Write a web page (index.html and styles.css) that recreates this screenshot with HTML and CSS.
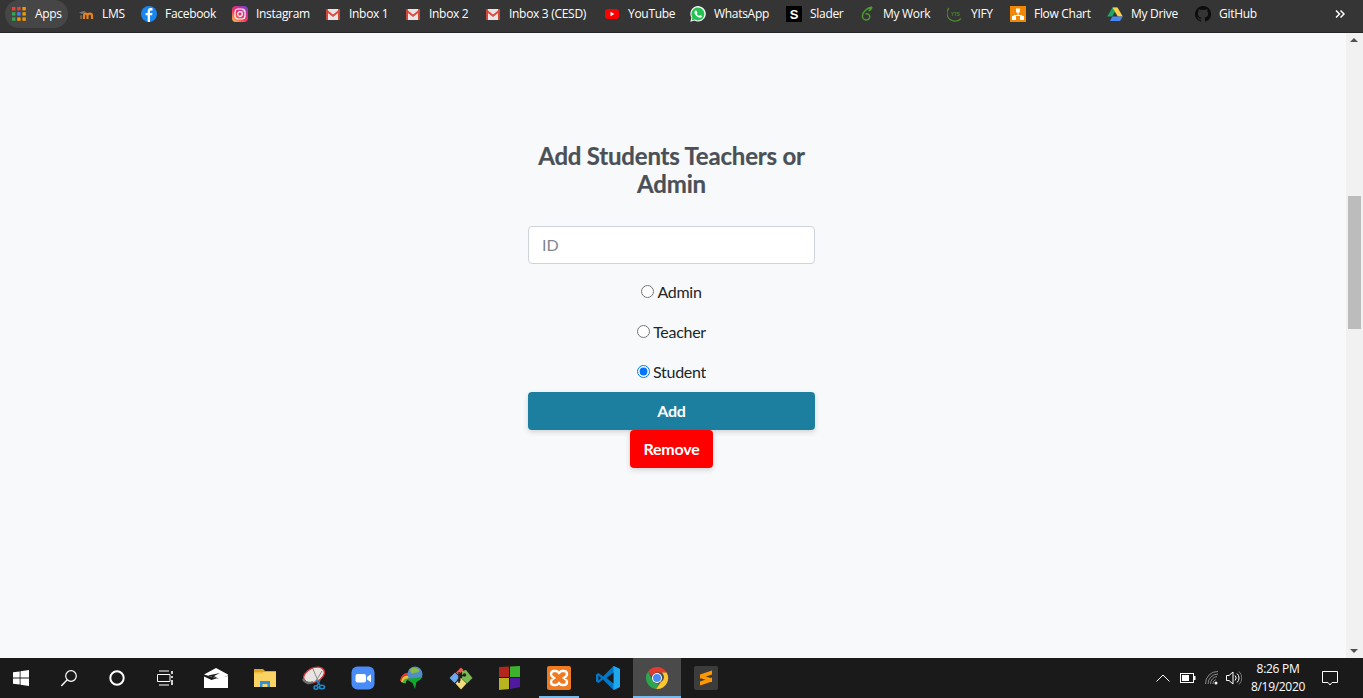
FILE: index.html
```html
<!DOCTYPE html>
<html lang="en">
<head>
<meta charset="utf-8">
<title>Add Students Teachers or Admin</title>
<link rel="stylesheet" href="styles.css">
</head>
<body>
<div class="screen">
  <nav class="bookmarks">
    <a class="bm bm-apps"><svg class="ico" viewBox="0 0 16 16"><g><rect x="1" y="1" width="3.4" height="3.4" fill="#ea4335"/><rect x="6.2" y="1" width="3.4" height="3.4" fill="#ea4335"/><rect x="11.4" y="1" width="3.4" height="3.4" fill="#f29900"/><rect x="1" y="6.2" width="3.4" height="3.4" fill="#34a853"/><rect x="6.2" y="6.2" width="3.4" height="3.4" fill="#4285f4"/><rect x="11.4" y="6.2" width="3.4" height="3.4" fill="#f29900"/><rect x="1" y="11.4" width="3.4" height="3.4" fill="#34a853"/><rect x="6.2" y="11.4" width="3.4" height="3.4" fill="#f29900"/><rect x="11.4" y="11.4" width="3.4" height="3.4" fill="#f29900"/></g></svg><span>Apps</span></a>
    <a class="bm"><svg class="ico" viewBox="0 0 16 16"><path d="M1 6.500L6 5l2 1-4 2z" fill="#777"/><path d="M3 13V9.300" stroke="#8a6a4a" stroke-width="1.600"/><path d="M6 13V9.500c0-2.600 3.500-2.600 3.500 0V13M9.500 9.500c0-2.600 4.500-2.600 4.500 0V13" fill="none" stroke="#e8811c" stroke-width="2.200"/></svg><span>LMS</span></a>
    <a class="bm"><svg class="ico" viewBox="0 0 16 16"><circle cx="8" cy="8" r="8" fill="#1a86f0"/><path d="M9 16V9.300h2.100l.4-2.400H9V5.600c0-.8.300-1.200 1.200-1.200h1.300V2.300c-.5-.1-1.200-.2-1.900-.2C8 2.100 6.700 3.300 6.700 5.300v1.600H4.600v2.400h2.100V16z" fill="#fff"/></svg><span>Facebook</span></a>
    <a class="bm"><svg class="ico" viewBox="0 0 16 16"><defs><linearGradient id="ig" x1="0.100" y1="1" x2="0.900" y2="0"><stop offset="0" stop-color="#fdc04d"/><stop offset=".4" stop-color="#ee3a5c"/><stop offset=".75" stop-color="#c42d9f"/><stop offset="1" stop-color="#5d4fd0"/></linearGradient></defs><rect width="16" height="16" rx="4" fill="url(#ig)"/><rect x="3" y="3" width="10" height="10" rx="3" fill="none" stroke="#fff" stroke-width="1.200"/><circle cx="8" cy="8" r="2.300" fill="none" stroke="#fff" stroke-width="1.200"/><circle cx="11.100" cy="4.900" r=".7" fill="#fff"/></svg><span>Instagram</span></a>
    <a class="bm"><svg class="ico" viewBox="0 0 16 16"><use href="#gm"/></svg><span>Inbox 1</span></a>
    <a class="bm"><svg class="ico" viewBox="0 0 16 16"><use href="#gm"/></svg><span>Inbox 2</span></a>
    <a class="bm"><svg class="ico" viewBox="0 0 16 16"><use href="#gm"/></svg><span>Inbox 3 (CESD)</span></a>
    <a class="bm"><svg class="ico" viewBox="0 0 16 16"><rect x="1" y="3" width="14" height="10" rx="3" fill="#f00"/><path d="M6.500 5.800v4.400L10.300 8z" fill="#fff"/></svg><span>YouTube</span></a>
    <a class="bm"><svg class="ico" viewBox="0 0 16 16"><path d="M.3 15.700l1.100-4A7.700 7.700 0 1 1 4.400 14.600z" fill="#fff"/><path d="M1.600 14.400l.8-2.900A6.500 6.500 0 1 1 4.600 13.600z" fill="#25c253"/><path d="M5.800 4.500c-.5 0-1.300.6-1.300 1.800 0 2.400 3 5.400 5.600 5.400 1.200 0 1.800-.9 1.800-1.500 0-.3-1.600-1.100-1.900-1.100-.3 0-.6.8-.9.8-.6 0-2.300-1.500-2.300-2.100 0-.3.600-.6.600-1 0-.3-.6-2.300-1.600-2.300z" fill="#fff"/></svg><span>WhatsApp</span></a>
    <a class="bm"><svg class="ico" viewBox="0 0 16 16"><rect width="16" height="16" fill="#000"/><text x="8" y="12.500" class="slader-s">S</text></svg><span>Slader</span></a>
    <a class="bm"><svg class="ico" viewBox="0 0 16 16"><path d="M13 1C8 2 3 6 3.500 11c.3 3 4.500 4 6.500 1.800 2-2.300 0-5.800-3.500-4.800M13 1c-.6 2-1.500 3.500-3.500 3.800" fill="none" stroke="#4aa02c" stroke-width="1.400"/></svg><span>My Work</span></a>
    <a class="bm"><svg class="ico" viewBox="0 0 16 16"><path d="M2 2A7.500 7.500 0 0 0 14 12.500" fill="none" stroke="#4c8a2a" stroke-width="1.200"/><text x="8.500" y="9.500" class="yts">YTS</text></svg><span>YIFY</span></a>
    <a class="bm"><svg class="ico" viewBox="0 0 16 16"><rect width="16" height="16" fill="#f08705"/><path d="M8 6v3M4 12V9.500h8V12" fill="none" stroke="#fff" stroke-width="1"/><rect x="6" y="2.500" width="4" height="4" fill="#fff"/><rect x="2" y="10" width="4" height="4" fill="#fff"/><rect x="10" y="10" width="4" height="4" fill="#fff"/></svg><span>Flow Chart</span></a>
    <a class="bm"><svg class="ico" viewBox="0 0 16 16"><path d="M5.500 1.500h5L5.200 10.500H.2z" fill="#1fa463"/><path d="M10.500 1.500l5.300 9h-5L5.500 1.500z" fill="#ffd04b"/><path d="M3 15l2.400-4.500h10.400L13 15z" fill="#4688f4"/></svg><span>My Drive</span></a>
    <a class="bm"><svg class="ico" viewBox="0 0 16 16"><path d="M8 0a8 8 0 0 0-2.500 15.600c.4.100.5-.2.500-.4v-1.400c-2.200.5-2.700-1-2.700-1-.4-.9-.9-1.200-.9-1.200-.7-.5.100-.5.100-.5.800.1 1.200.8 1.200.8.700 1.200 1.900.9 2.300.7.100-.5.300-.9.500-1.100-1.800-.2-3.600-.9-3.600-4 0-.9.300-1.600.8-2.100-.1-.2-.4-1 .1-2.100 0 0 .7-.2 2.200.8a7.600 7.600 0 0 1 4 0c1.500-1 2.200-.8 2.200-.8.400 1.100.2 1.900.1 2.100.5.600.8 1.300.8 2.100 0 3.100-1.900 3.800-3.700 4 .3.300.6.800.6 1.500v2.200c0 .2.100.5.600.4A8 8 0 0 0 8 0z" fill="#0d0d0d"/></svg><span>GitHub</span></a>
    <a class="bm-more"><svg width="10" height="10" viewBox="0 0 10 10"><path d="M1 1.500L4.500 5 1 8.500M5.500 1.500L9 5 5.500 8.500" fill="none" stroke="#fff" stroke-width="1.500"/></svg></a>
  </nav>

  <svg class="defs" width="0" height="0"><defs><g id="gm"><rect x="1" y="3" width="14" height="11" fill="#e6e6e6"/><path d="M1 3l7 5.500L15 3v2.500L8 11 1 5.500z" fill="#dc4b3e"/><rect x="1" y="3" width="2" height="11" fill="#d44638"/><rect x="13" y="3" width="2" height="11" fill="#d44638"/></g></defs></svg>

  <div class="viewport">
    <main class="page">
      <form class="panel">
        <h1 class="title">Add Students Teachers or Admin</h1>
        <input class="field" type="text" placeholder="ID">
        <label class="choice"><input type="radio" name="role"><span>Admin</span></label>
        <label class="choice"><input type="radio" name="role"><span>Teacher</span></label>
        <label class="choice"><input type="radio" name="role" checked><span>Student</span></label>
        <button class="btn btn-add" type="button">Add</button>
        <button class="btn btn-remove" type="button">Remove</button>
      </form>
    </main>
    <div class="scrollbar">
      <span class="arrow arrow-up"></span>
      <span class="thumb"></span>
      <span class="arrow arrow-down"></span>
    </div>
  </div>

  <footer class="taskbar">
    <span class="tb tb-start"><svg width="16" height="16" viewBox="0 0 16 16"><path d="M0 2.300l6.700-.9v6.200H0zM7.500 1.300L16 0v7.600H7.500zM0 8.400h6.700v6.200L0 13.700zM7.500 8.400H16V16l-8.500-1.200z" fill="#fff"/></svg></span>
    <span class="tb"><svg width="18" height="18" viewBox="0 0 18 18"><circle cx="11" cy="7" r="5.300" fill="none" stroke="#fff" stroke-width="1.200"/><path d="M7.200 10.800L1.300 17" stroke="#fff" stroke-width="1.400"/></svg></span>
    <span class="tb"><svg width="16" height="16" viewBox="0 0 16 16"><circle cx="8" cy="8" r="6.700" fill="none" stroke="#fff" stroke-width="2"/></svg></span>
    <span class="tb"><svg width="16" height="16" viewBox="0 0 16 16"><path d="M2 1h10M2 15h10M.5 4.500h12.500v7H.500z" fill="none" stroke="#fff" stroke-width="1"/><path d="M15 1v3M15 6v2M15 10v5" stroke="#fff" stroke-width="1.600"/></svg></span>
    <div class="pinned">
      <span class="tb"><svg width="24" height="20" viewBox="0 0 24 20"><path d="M0 6.500L12 0l12 6.500v1L15 11z" fill="#fff"/><path d="M0 8.500l7.500 3.500L15 9.500 24 8v12H0z" fill="#fff"/><path d="M4 7.500L16 5l-6 3 5 3z" fill="#1a1a1a"/></svg></span>
      <span class="tb"><svg width="24" height="20" viewBox="0 0 24 20"><path d="M1 1h9l2 2h11v3H1z" fill="#e0a526"/><path d="M1 4h22v15H1z" fill="#f9d465"/><path d="M7 19v-6h10v6h-2.500v-3h-5v3z" fill="#2f8fd8"/><path d="M1 4h9v1.500H1z" fill="#f2bd3a"/></svg></span>
      <span class="tb"><svg width="24" height="24" viewBox="0 0 24 24"><ellipse cx="12" cy="9" rx="11" ry="7" transform="rotate(-25 12 9)" fill="#e8e4e0" stroke="#d8333c" stroke-width="1.300"/><path d="M1 13c2 4 6 5 10 3" fill="none" stroke="#6f6f6f" stroke-width="2.400"/><path d="M11 3l5 12M20 5l-6 10" stroke="#8a8a8a" stroke-width="1"/><path d="M14 14l4 5M18 14l-3 6" stroke="#1f88c8" stroke-width="1.400"/><ellipse cx="20" cy="21" rx="2.500" ry="1.800" fill="none" stroke="#1f88c8" stroke-width="1.600"/><ellipse cx="14" cy="21.500" rx="2" ry="1.700" fill="none" stroke="#1f88c8" stroke-width="1.600"/></svg></span>
      <span class="tb"><svg width="24" height="24" viewBox="0 0 24 24"><rect x=".5" y=".5" width="23" height="23" rx="6" fill="#4a8cf7"/><rect x="4.500" y="8" width="10.500" height="8.500" rx="2" fill="#fff"/><path d="M16 11l4-2.800v8L16 13.500z" fill="#fff"/></svg></span>
      <span class="tb"><svg width="24" height="24" viewBox="0 0 24 24"><path d="M0 15C1 9 5 6 9 7l3 4c-4-1-6 1-6.500 5.500z" fill="#e23a2f"/><path d="M1 16c1-5 4-7 7-6l2 2.500c-3-.5-4.500 1-5 4.500z" fill="#f4c430"/><path d="M2.500 17C3 13.500 5 12 7.500 12.500L9 14c-2-.5-3 .5-3.300 3.500z" fill="#3fb04a"/><circle cx="15" cy="8" r="7.500" fill="#4f8ec9"/><path d="M9.500 3.500c3-2.500 8-2.500 10 1-2 3.500-5 1-7.500 3.500z" fill="#8cb84a"/><path d="M6 13l17-2-6.500 5-1.500 7-2.500-6z" fill="#11a82e"/></svg></span>
      <span class="tb"><svg width="24" height="24" viewBox="0 0 24 24"><path d="M7 6.500l5-5 2.500 2.500-5 5z" fill="#f05c54"/><path d="M.5 12L6 6.500 11 11.500 5.500 17z" fill="#6ea8f0"/><path d="M13 5l4-1 6.500 8-5.500 5.500-5-5z" fill="#76b852"/><path d="M6.500 17.500L12 12l5.500 5.500-5.500 6z" fill="#f4dc7a"/><path d="M10 6v11M10 11l5-2" stroke="#222" stroke-width="1.400" fill="none"/><circle cx="15.500" cy="9" r="1.700" fill="#222"/><circle cx="10" cy="14" r="1.700" fill="#222"/></svg></span>
      <span class="tb"><svg width="22" height="24" viewBox="0 0 22 24"><path d="M0 1l10-.5V11H0z" fill="#b3261c"/><path d="M11 .5L21 0v11H11z" fill="#3db22c"/><path d="M0 12h10v11L0 24z" fill="#b9b31f"/><path d="M11 12h10v9l-10 2z" fill="#4f1aa0"/></svg></span>
      <span class="tb tb-open"><svg width="24" height="24" viewBox="0 0 24 24"><rect width="24" height="24" rx="2" fill="#ee7a22"/><path d="M7 5h2c1.500 0 2 1 3 2 1-1 1.500-2 3-2h2c2.500 0 3 2 3 3.500s-1.500 2.500-3 3.500c1.500 1 3 2 3 3.500s-.5 3.500-3 3.500h-2c-1.500 0-2-1-3-2-1 1-1.500 2-3 2H7c-2.500 0-3-2-3-3.500S5.500 13 7 12c-1.500-1-3-2-3-3.500S4.500 5 7 5z" fill="none" stroke="#fff" stroke-width="2.400"/></svg></span>
      <span class="tb"><svg width="24" height="24" viewBox="0 0 24 24"><path d="M17.500 0L24 3v18l-6.500 3L7 13.500l-4.500 3.500L0 15.500v-7L2.500 7 7 10.500z" fill="#0078c8"/><path d="M17.500 0L24 3v18l-6.500 3z" fill="#1fa8ee"/><path d="M17.500 6.500L10.500 12l7 5.500z" fill="#1a1a1a"/><path d="M2.500 9.500v5L5 12z" fill="#1a1a1a"/></svg></span>
      <span class="tb tb-active"><svg width="24" height="24" viewBox="0 0 24 24"><path d="M12 1a11 11 0 0 1 9.600 5.500H12a5.500 5.500 0 0 0-5.200 3.800L3.100 5.600A11 11 0 0 1 12 1z" fill="#e33b2e"/><path d="M21.600 6.500A11 11 0 0 1 11 23l4.800-7a5.500 5.500 0 0 0 .7-9.500z" fill="#fbc62e"/><path d="M3.100 5.600L7.500 14a5.500 5.500 0 0 0 6.500 3.200L11 23A11 11 0 0 1 3.100 5.600z" fill="#2fa44f"/><circle cx="12" cy="12" r="5" fill="#fff"/><circle cx="12" cy="12" r="4" fill="#4a8af4"/></svg></span>
      <span class="tb"><svg width="24" height="24" viewBox="0 0 24 24"><rect width="24" height="24" rx="2" fill="#3c3c3c"/><path d="M6 8.500L18 4.500v4L6 12.500zM6 8.500l12 4V16L6 12zM6 15.500l12-4v4L6 19.500z" fill="#ff9800"/></svg></span>
    </div>
    <div class="tray">
      <span class="tr tr-caret"><svg width="14" height="8" viewBox="0 0 14 8"><path d="M.5 7.500L7 1l6.500 6.500" fill="none" stroke="#fff" stroke-width="1"/></svg></span>
      <span class="tr tr-batt"><svg width="16" height="10" viewBox="0 0 16 10"><rect x=".5" y=".5" width="13" height="9" fill="none" stroke="#fff"/><rect x="2" y="2" width="7" height="6" fill="#fff"/><rect x="14" y="3" width="1.500" height="4" fill="#fff"/></svg></span>
      <span class="tr tr-wifi"><svg width="14" height="14" viewBox="0 0 14 14"><path d="M.5 13A12 12 0 0 1 13 .5M3 13A10 10 0 0 1 13 3M5.500 13A7.500 7.500 0 0 1 12 5.500M7.800 13a5 5 0 0 1 3-4.500" fill="none" stroke="#8a8a8a" stroke-width="1"/><circle cx="11" cy="12" r="1.500" fill="#fff"/></svg></span>
      <span class="tr tr-vol"><svg width="16" height="14" viewBox="0 0 16 14"><path d="M.5 4.500h2.500L7 1v12L3 9.500H.5z" fill="none" stroke="#fff"/><path d="M9 4.500a3.500 3.500 0 0 1 0 5M11 2.500a6 6 0 0 1 0 9" fill="none" stroke="#fff"/><path d="M13 .5a9 9 0 0 1 0 13" fill="none" stroke="#777"/></svg></span>
      <span class="clock"><span>8:26 PM</span><span>8/19/2020</span></span>
      <span class="tr tr-note"><svg width="16" height="15" viewBox="0 0 16 15"><path d="M.5.500h15v11H10l-2 2.500-2-2.500H.5z" fill="none" stroke="#fff"/></svg></span>
    </div>
  </footer>
</div>
</body>
</html>
```
FILE: styles.css
```css
* { box-sizing: border-box; }
html, body { margin: 0; height: 100%; overflow: hidden; }
body { font-family: "Lato", "Liberation Sans", sans-serif; background: #f8f9fa; }

.screen { display: flex; flex-direction: column; height: 100vh; }

/* Bookmarks bar */
.bookmarks {
  flex: 0 0 33px;
  display: grid;
  grid-template-columns: 67px 63px 91px 93px 80px 80px 119px 86px 96px 73px 88px 63px 97px 88px 1fr 28px;
  align-items: center;
  padding: 0 0 5px 11px;
  background: #353535;
  border-bottom: 1px solid #262626;
  font: 12px/16px "Open Sans", "Noto Sans", sans-serif;
  letter-spacing: -.3px;
  color: #fff;
}
.bm { display: flex; align-items: center; gap: 8px; white-space: nowrap; position: relative; }
.bm-apps::before {
  content: "";
  position: absolute;
  left: -6px; top: -6px;
  width: 63px; height: 28px;
  border-radius: 14px;
  background: #464646;
}
.bm-apps > * { position: relative; }
.bm-more { display: flex; align-items: center; }
.ico { width: 16px; height: 16px; flex: none; }
.slader-s { font: 900 13px "Liberation Sans", sans-serif; fill: #fff; text-anchor: middle; letter-spacing: 0; }
.yts { font: 700 4.500px "Liberation Sans", sans-serif; fill: #4c8a2a; text-anchor: middle; letter-spacing: 0; }
.defs { position: absolute; }

/* Page */
.viewport { flex: 1; display: flex; min-height: 0; }
.page { flex: 1; padding: 109px 3px 0 0; background: #f8f9fa; }
.panel { width: 287px; margin: 0 auto; display: flex; flex-direction: column; align-items: center; }
.title {
  margin: 0 0 28px;
  font: 700 24px/28px "Lato", sans-serif;
  letter-spacing: -.2px;
  -webkit-text-stroke: .2px #4a5056;
  color: #4a5056;
  text-align: center;
}
.field {
  width: 100%; height: 38px;
  padding: 0 0 2px 13px;
  margin-bottom: 8px;
  border: 1px solid #ced4da;
  border-radius: 4px;
  background: #fff;
  font: 16px "Lato", sans-serif;
  color: #333;
}
.field::placeholder { color: #7f868d; }
.choice {
  height: 40px;
  display: flex; align-items: center;
  font-size: 16px;
  letter-spacing: -.3px;
  color: #212529;
}
.choice span { padding-bottom: 2px; }
.choice input { width: 13px; height: 13px; margin: 0 3px 2px 0; }
.btn {
  height: 38px;
  padding: 0 0 2px;
  border: 1px solid transparent;
  border-radius: 4px;
  font: 700 16px "Lato", sans-serif;
  letter-spacing: -.2px;
  color: #fff;
  box-shadow: 0 2px 5px rgba(58, 59, 69, .2);
}
.btn-add { width: 100%; background: #1c7fa0; }
.btn-remove { width: 83px; background: #f00; }

/* Scrollbar */
.scrollbar { flex: 0 0 17px; background: #f1f1f1; display: flex; flex-direction: column; align-items: center; position: relative; }
.thumb { width: 13px; height: 133px; margin-top: 163px; background: #bcbcbc; }
.arrow { position: absolute; left: 4px; width: 0; height: 0; border-left: 4px solid transparent; border-right: 4px solid transparent; }
.arrow-up { top: 5px; border-bottom: 4px solid #505050; }
.arrow-down { bottom: 5px; border-top: 4px solid #505050; }

/* Taskbar */
.taskbar { flex: 0 0 40px; display: flex; background: #1a1a1a; color: #fff; }
.tb { flex: 0 0 48px; height: 40px; display: flex; align-items: center; justify-content: center; position: relative; }
.tb-start { flex-basis: 42px; margin-right: 3px; }
.pinned { display: flex; gap: 1px; margin-left: 3px; }
.tb-active { background: #4a4a4a; }
.tb-active::after, .tb-open::after {
  content: "";
  position: absolute;
  bottom: 0; height: 2px;
  background: #76b9ed;
}
.tb-active::after { left: 0; right: 0; }
.tb-open::after { left: 4px; right: 4px; }
.tray { margin-left: auto; display: flex; align-items: center; padding-right: 15px; }
.tr { display: flex; align-items: center; justify-content: center; height: 40px; }
.tr-caret { width: 25px; }
.tr-batt { width: 25px; }
.tr-wifi { width: 23px; }
.tr-vol { width: 21px; }
.tr-note { width: 36px; }
.clock {
  width: 68px;
  display: flex; flex-direction: column; align-items: center;
  font: 12px/18px "Open Sans", "Noto Sans", sans-serif;
  letter-spacing: -.3px;
  color: #fff;
}
```
